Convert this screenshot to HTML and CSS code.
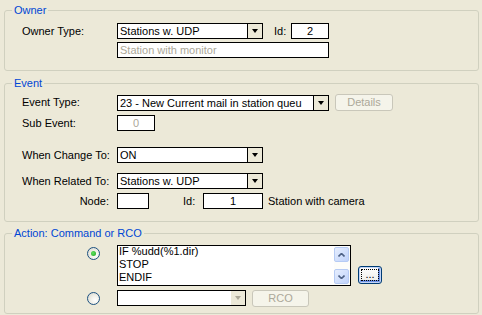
FILE: index.html
```html
<!DOCTYPE html>
<html lang="en">
<head>
  <meta charset="UTF-8">
  <title>Event Action</title>
  <link rel="stylesheet" href="styles.css">
</head>
<body>

  <fieldset class="group owner">
    <legend>Owner</legend>
    <div class="row">
      <span class="lbl">Owner Type:</span>
      <div class="combo w146"><span class="val">Stations w. UDP</span><span class="drop"><i></i></span></div>
      <span class="idlbl">Id:</span>
      <div class="box w38 center">2</div>
    </div>
    <div class="row gap3">
      <span class="lbl"></span>
      <div class="box w212 off">Station with monitor</div>
    </div>
  </fieldset>

  <fieldset class="group event">
    <legend>Event</legend>
    <div class="row tall">
      <span class="lbl">Event Type:</span>
      <div class="combo w212"><span class="val">23 - New Current mail in station queu</span><span class="drop"><i></i></span></div>
      <button class="btn off w58">Details</button>
    </div>
    <div class="row gap4">
      <span class="lbl">Sub Event:</span>
      <div class="box w38 center off">0</div>
    </div>
    <div class="row gap16">
      <span class="lbl">When Change To:</span>
      <div class="combo w146"><span class="val">ON</span><span class="drop"><i></i></span></div>
    </div>
    <div class="row gap10">
      <span class="lbl">When Related To:</span>
      <div class="combo w146"><span class="val">Stations w. UDP</span><span class="drop"><i></i></span></div>
    </div>
    <div class="row gap4">
      <span class="lbl right">Node:</span>
      <div class="box w32"></div>
      <span class="idlbl wide">Id:</span>
      <div class="box w60 center">1</div>
      <span class="note">Station with camera</span>
    </div>
  </fieldset>

  <fieldset class="group action">
    <legend>Action: Command or RCO</legend>
    <div class="row memo-row">
      <span class="lbl radio-cell"><span class="radio on"></span></span>
      <div class="memo">
        <div class="memo-text">IF %udd(%1.dir)<br>STOP<br>ENDIF</div>
        <div class="vscroll">
          <span class="sbtn"><svg width="7" height="4" viewBox="0 0 7 4"><path d="M0.5 3.5 L3.5 0.5 L6.5 3.5" stroke="#4d6185" stroke-width="1.6" fill="none"/></svg></span>
          <span class="sbtn"><svg width="7" height="4" viewBox="0 0 7 4"><path d="M0.5 0.5 L3.5 3.5 L6.5 0.5" stroke="#4d6185" stroke-width="1.6" fill="none"/></svg></span>
        </div>
      </div>
      <button class="btn focus"><span>...</span></button>
    </div>
    <div class="row gap4">
      <span class="lbl radio-cell mid"><span class="radio"></span></span>
      <div class="combo w129"><span class="val"></span><span class="drop dim"><i></i></span></div>
      <button class="btn off w57">RCO</button>
    </div>
  </fieldset>

</body>
</html>
```

FILE: styles.css
```css
body {
  margin: 0;
  padding: 0 3px 0 4px;
  background: #ece9d8;
  font: 11px/13px "Liberation Sans", Arial, sans-serif;
  color: #000;
}
.group {
  margin: 4px 0 0;
  padding: 6px 0 12px 17px;
  border: 1px solid #d0d0bf;
  border-radius: 3px;
  min-width: 0;
}
.event {
  margin-top: 6px;
  padding-top: 4px;
  padding-bottom: 12px;
}
.action {
  margin-top: 5px;
  padding-top: 5px;
  padding-bottom: 7px;
}
.group legend {
  margin-left: -10px;
  padding: 0 2px;
  color: #0046d5;
}
.row {
  display: flex;
  align-items: center;
  height: 16px;
}
.row.tall { height: 17px; }
.gap3 { margin-top: 3px; }
.gap4 { margin-top: 4px; }
.gap10 { margin-top: 10px; }
.gap16 { margin-top: 16px; }
.lbl {
  width: 95px;
  flex: none;
}
.lbl.right {
  text-align: right;
  padding-right: 8px;
  box-sizing: border-box;
}
.idlbl {
  width: 28px;
  padding-left: 11px;
  box-sizing: border-box;
  flex: none;
}
.idlbl.wide {
  width: 54px;
  padding-left: 34px;
}
.note { margin-left: 5px; }

.box, .combo {
  box-sizing: border-box;
  height: 16px;
  border: 1px solid #000;
  background: #fff;
  flex: none;
  white-space: nowrap;
  overflow: hidden;
}
.box { padding: 0 2px; line-height: 14px; }
.center { text-align: center; }
.off { color: #aca899; }
.w32 { width: 32px; }
.w38 { width: 38px; }
.w60 { width: 60px; }
.w129 { width: 129px; }
.w146 { width: 146px; }
.w212 { width: 212px; }
.w57 { width: 57px; }
.w58 { width: 58px; }

.combo { display: flex; }
.combo .val {
  flex: 1;
  padding-left: 2px;
  line-height: 14px;
  overflow: hidden;
}
.combo .drop {
  width: 15px;
  border-left: 1px solid #000;
  background: #ece9d8;
  box-sizing: border-box;
  display: flex;
  align-items: center;
  justify-content: center;
}
.combo .drop i {
  width: 0;
  height: 0;
  border-left: 3.5px solid transparent;
  border-right: 3.5px solid transparent;
  border-top: 4px solid #000;
}
.combo .drop.dim {
  border-left-color: #fff;
}
.combo .drop.dim i { border-top-color: #aca899; }

.btn {
  box-sizing: border-box;
  height: 17px;
  margin-left: 6px;
  padding: 0;
  font: inherit;
  border-radius: 3px;
  flex: none;
}
.btn.off {
  border: 1px solid #c9c7ba;
  background: #f5f4ea;
  color: #aca899;
}

.memo-row { height: 41px; align-items: flex-start; }
.radio-cell {
  display: flex;
  justify-content: flex-end;
  padding: 2px 17px 0 0;
  box-sizing: border-box;
}
.radio-cell.mid { padding-top: 0; }
.radio {
  width: 13px;
  height: 13px;
  box-sizing: border-box;
  border: 1px solid #1c5180;
  border-radius: 50%;
  background: radial-gradient(circle at 65% 65%, #fff 0, #f2f1ea 40%, #d4d4cb 100%);
  display: flex;
  align-items: center;
  justify-content: center;
}
.radio.on::after {
  content: "";
  width: 5px;
  height: 5px;
  border-radius: 50%;
  background: radial-gradient(circle at 40% 40%, #5fe35f, #21a121);
}

.memo {
  box-sizing: border-box;
  width: 234px;
  height: 41px;
  border: 1px solid #000;
  background: #fff;
  display: flex;
  flex: none;
}
.memo-text {
  flex: 1;
  padding-left: 1px;
  margin-top: -1px;
}
.vscroll {
  width: 16px;
  padding: 1px 0;
  display: flex;
  flex-direction: column;
  justify-content: space-between;
  background: #fdfdfa;
}
.sbtn {
  width: 15px;
  height: 15px;
  box-sizing: border-box;
  border: 1px solid #b6cbf4;
  border-radius: 2px;
  background: linear-gradient(135deg, #e6eefe, #c0d3fb);
  display: flex;
  align-items: center;
  justify-content: center;
}
.btn.focus {
  align-self: flex-end;
  margin: 0 0 2px 7px;
  width: 24px;
  height: 18px;
  border: 1px solid #003c74;
  background: linear-gradient(#fff, #ecebe6);
  box-shadow: inset 0 0 0 1px #c3d4f7, inset -1px -1px 0 2px #6f93e6;
  display: flex;
  align-items: center;
  justify-content: center;
}
.btn.focus span {
  width: 16px;
  height: 10px;
  border: 1px dotted #000;
  line-height: 8px;
  text-align: center;
}
```
